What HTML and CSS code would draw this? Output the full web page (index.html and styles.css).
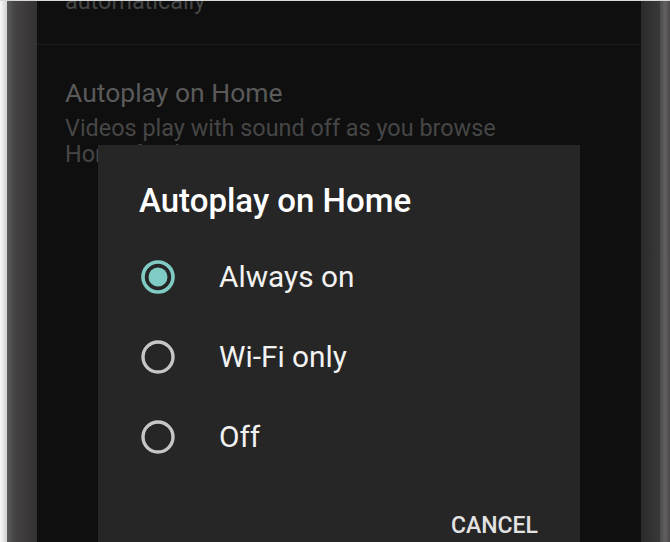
FILE: index.html
```html
<!DOCTYPE html>
<html lang="en">
<head>
<meta charset="utf-8">
<title>Autoplay on Home</title>
<link rel="stylesheet" href="styles.css">
</head>
<body>
<div class="device">
  <div class="bezel bezel-left">
    <div class="edge-light"></div>
    <div class="edge-mid"></div>
    <div class="edge-dark"></div>
  </div>
  <div class="screen">
    <div class="settings">
      <div class="setting setting-first">
        <p class="setting-desc">automatically</p>
      </div>
      <div class="setting">
        <p class="setting-title">Autoplay on Home</p>
        <p class="setting-desc">Videos play with sound off as you browse<br>Home feed</p>
      </div>
    </div>
    <div class="dialog">
      <h2 class="dialog-title">Autoplay on Home</h2>
      <div class="options">
        <div class="option">
          <svg class="radio" viewBox="0 0 34 34" width="34" height="34"><circle cx="17" cy="17" r="15" fill="none" stroke="#80cbc4" stroke-width="3.6"/><circle cx="17" cy="17" r="9.5" fill="#80cbc4"/></svg>
          <span class="option-label">Always on</span>
        </div>
        <div class="option">
          <svg class="radio" viewBox="0 0 34 34" width="34" height="34"><circle cx="17" cy="17" r="15" fill="none" stroke="#c6c6c6" stroke-width="3.4"/></svg>
          <span class="option-label">Wi-Fi only</span>
        </div>
        <div class="option">
          <svg class="radio" viewBox="0 0 34 34" width="34" height="34"><circle cx="17" cy="17" r="15" fill="none" stroke="#c6c6c6" stroke-width="3.4"/></svg>
          <span class="option-label">Off</span>
        </div>
      </div>
      <div class="actions">
        <span class="btn">CANCEL</span>
      </div>
    </div>
  </div>
  <div class="bezel bezel-right">
    <div class="edge-dark"></div>
    <div class="edge-mid"></div>
  </div>
</div>
</body>
</html>
```

FILE: styles.css
```css
* { box-sizing: border-box; }
html, body {
  margin: 0;
  padding: 0;
  width: 670px;
  height: 542px;
  overflow: hidden;
  background: #0f0f0f;
  font-family: Roboto, "Noto Sans", "Liberation Sans", sans-serif;
}
.device {
  display: flex;
  width: 670px;
  height: 542px;
  border-top: 1px solid #d8d8d8;
}
.bezel {
  display: flex;
  height: 100%;
}
.bezel-left { width: 37px; }
.bezel-left .edge-light {
  width: 7px;
  background: linear-gradient(90deg, #fafafa, #d0d0d0);
}
.bezel-left .edge-mid {
  width: 6px;
  background: linear-gradient(90deg, #5e5e5e, #4a4848);
}
.bezel-left .edge-dark {
  flex: 1;
  background: linear-gradient(90deg, #474545 0, #3e3c3c 40%, #343232 100%);
}
.bezel-right { width: 29px; }
.bezel-right .edge-dark {
  flex: 1;
  background: linear-gradient(90deg, #2c2b2b, #3a3939);
}
.bezel-right .edge-mid {
  width: 10px;
  background: linear-gradient(90deg, #4c4a4a, #626060 50%, #4a4848);
}
.screen {
  position: relative;
  flex: 1;
  background: #0f0f0f;
  overflow: hidden;
}
.settings {
  margin-top: -13.2px;
}
.setting {
  padding: 0 28px;
}
.setting-first {
  padding-bottom: 30.2px;
  border-bottom: 1px solid #1d1d1d;
}
.setting p { margin: 0; }
.setting-title {
  padding-top: 31.5px;
  font-size: 26.5px;
  line-height: 32px;
  color: #5a5a5a;
}
.setting-desc {
  font-size: 23.4px;
  line-height: 26.3px;
  color: #464646;
}
.setting-title + .setting-desc { margin-top: 6.3px; }
.dialog {
  position: absolute;
  left: 61px;
  top: 144px;
  width: 482px;
  bottom: 0;
  background: #262626;
  padding: 36px 42px 0 41px;
}
.dialog-title {
  margin: 0;
  font-size: 33px;
  font-weight: 500;
  line-height: 40px;
  color: #ffffff;
}
.options {
  margin-top: 15.5px;
}
.option {
  display: flex;
  align-items: center;
  height: 80px;
  padding-left: 2px;
}
.radio {
  flex: none;
  display: block;
}
.option-label {
  margin-left: 44px;
  font-size: 29.8px;
  color: #f2f2f2;
}
.actions {
  display: flex;
  justify-content: flex-end;
  margin-top: 34px;
}
.btn {
  font-size: 23px;
  font-weight: 500;
  line-height: 30px;
  color: #e2e2e2;
}
```
